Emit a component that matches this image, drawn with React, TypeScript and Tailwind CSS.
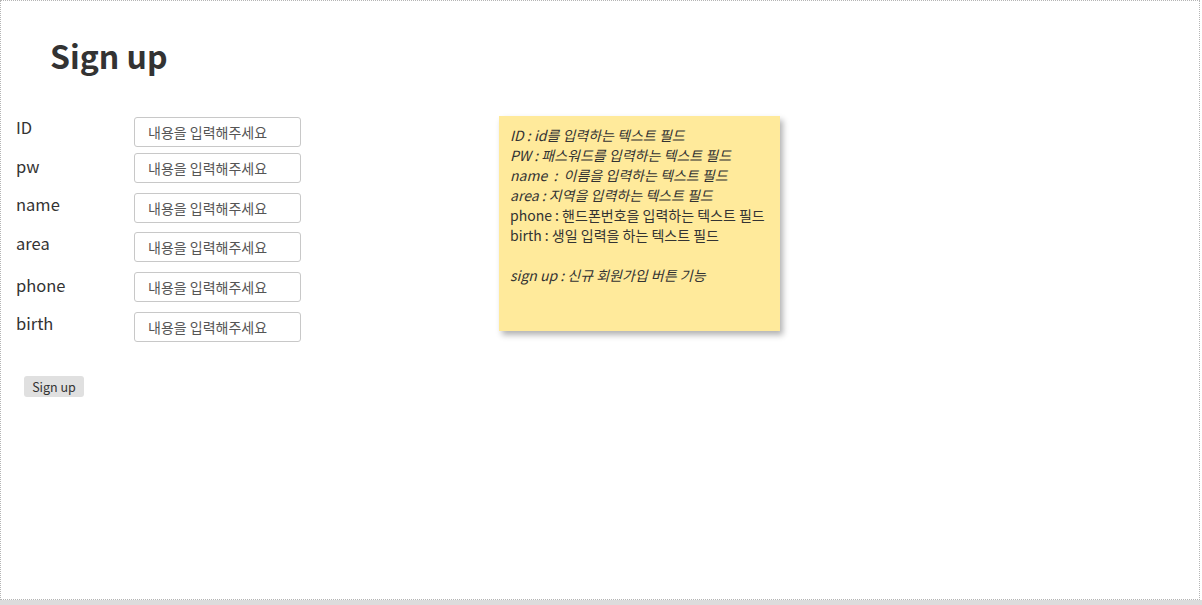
const fields = [
  { label: 'ID', rowClass: 'mt-0', labelClass: '-mt-[10px]' },
  { label: 'pw', rowClass: 'mt-[6px]', labelClass: '-mt-[4px]' },
  { label: 'name', rowClass: 'mt-[10px]', labelClass: '-mt-[9px]' },
  { label: 'area', rowClass: 'mt-[9px]', labelClass: '-mt-[9px]' },
  { label: 'phone', rowClass: 'mt-[10px]', labelClass: '-mt-[4px]' },
  { label: 'birth', rowClass: 'mt-[10px]', labelClass: '-mt-[9px]' },
]

const notes = [
  { key: 'ID', text: 'ID : id를 입력하는 텍스트 필드', italic: true },
  { key: 'PW', text: 'PW : 패스워드를 입력하는 텍스트 필드', italic: true },
  { key: 'name', text: 'name  :  이름을 입력하는 텍스트 필드', italic: true },
  { key: 'area', text: 'area : 지역을 입력하는 텍스트 필드', italic: true },
  { key: 'phone', text: 'phone : 핸드폰번호을 입력하는 텍스트 필드', italic: false },
  { key: 'birth', text: 'birth : 생일 입력을 하는 텍스트 필드', italic: false },
  { key: 'blank', text: '\u00a0', italic: false },
  { key: 'signup', text: 'sign up : 신규 회원가입 버튼 기능', italic: true },
]

const App = () => {
  return (
    <div
      className="w-[1202px] h-[605px] overflow-hidden bg-white text-[#333]"
      style={{ fontFamily: '"Noto Sans CJK KR", "Noto Sans", sans-serif' }}
    >
      <div className="w-[1200px] h-[600px] border border-dotted border-[#b5b5b5] bg-white">
        <h1 className="pl-[49px] pt-[35px] text-[32px] font-bold leading-[39px] text-[#333]">
          Sign up
        </h1>

        <div className="mt-[42px] flex items-start">
          <div className="w-[498px] pl-[15px]">
            {fields.map(field => (
              <div key={field.label} className={`flex h-[30px] items-center ${field.rowClass}`}>
                <span className={`w-[118px] text-[16.5px] leading-[22px] ${field.labelClass}`}>
                  {field.label}
                </span>
                <input
                  type="text"
                  placeholder="내용을 입력해주세요"
                  className="h-[30px] w-[167px] rounded-[3px] border border-[#c8c8c8] bg-white pl-[13px] text-[14px] text-[#555] outline-none placeholder:text-[#555]"
                />
              </div>
            ))}

            <button
              type="button"
              className="ml-[8px] mt-[34px] h-[21px] w-[60px] rounded-[3px] bg-[#e0e0e0] text-[12.5px] leading-[21px] text-[#333]"
            >
              Sign up
            </button>
          </div>

          <div className="-mt-[1px] h-[215px] w-[281px] bg-[#ffea9b] pl-[11px] pt-[9px] text-[14px] leading-[20px] text-[#333] shadow-[3px_4px_6px_rgba(0,0,0,0.3)]">
            {notes.map(note => (
              <p key={note.key} className={`whitespace-pre ${note.italic ? 'italic' : ''}`}>
                {note.text}
              </p>
            ))}
          </div>
        </div>
      </div>
      <div className="h-[5px] w-full bg-[#dcdcdc]" />
    </div>
  )
}

export default App
